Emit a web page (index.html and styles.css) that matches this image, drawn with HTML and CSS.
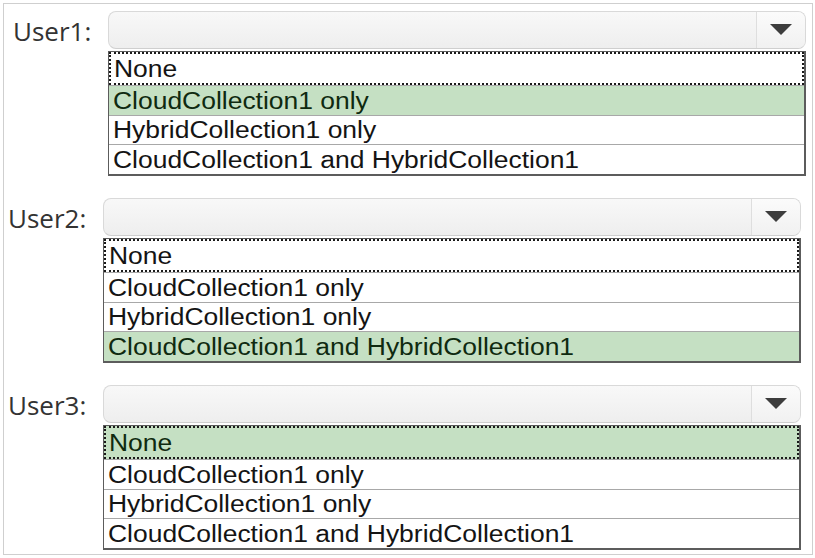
FILE: index.html
```html
<!DOCTYPE html>
<html>
<head>
<meta charset="utf-8">
<link rel="stylesheet" href="styles.css">
</head>
<body>
<div class="frame">
  <div class="group group--shift">
    <div class="label">User1:</div>
    <div class="combo">
      <div class="combo-field"></div>
      <div class="combo-btn"><span class="arrow"></span></div>
    </div>
    <div class="list">
      <div class="row focus"><span class="txt">None</span></div>
      <div class="row selected"><span class="txt">CloudCollection1 only</span></div>
      <div class="row"><span class="txt">HybridCollection1 only</span></div>
      <div class="row"><span class="txt">CloudCollection1 and HybridCollection1</span></div>
    </div>
  </div>
  <div class="group">
    <div class="label">User2:</div>
    <div class="combo">
      <div class="combo-field"></div>
      <div class="combo-btn"><span class="arrow"></span></div>
    </div>
    <div class="list">
      <div class="row focus"><span class="txt">None</span></div>
      <div class="row"><span class="txt">CloudCollection1 only</span></div>
      <div class="row"><span class="txt">HybridCollection1 only</span></div>
      <div class="row selected"><span class="txt">CloudCollection1 and HybridCollection1</span></div>
    </div>
  </div>
  <div class="group">
    <div class="label">User3:</div>
    <div class="combo">
      <div class="combo-field"></div>
      <div class="combo-btn"><span class="arrow"></span></div>
    </div>
    <div class="list">
      <div class="row focus selected"><span class="txt">None</span></div>
      <div class="row"><span class="txt">CloudCollection1 only</span></div>
      <div class="row"><span class="txt">HybridCollection1 only</span></div>
      <div class="row"><span class="txt">CloudCollection1 and HybridCollection1</span></div>
    </div>
  </div>
</div>
</body>
</html>
```
FILE: styles.css
```css
html, body {
  margin: 0;
  padding: 0;
  background: #ffffff;
}

.frame {
  box-sizing: border-box;
  margin: 3px;
  width: 810px;
  height: 552px;
  border: 1px solid #cfcfcf;
  padding: 7px 0 0 0;
  display: flex;
  flex-direction: column;
  gap: 22px;
}

.group {
  display: grid;
  grid-template-columns: 99px 698px;
  grid-template-rows: 38px 125px;
  row-gap: 2px;
}

.group--shift {
  padding-left: 5px;
}

.label {
  grid-column: 1;
  grid-row: 1;
  align-self: center;
  padding-left: 4px;
  font-family: "Open Sans", "DejaVu Sans", sans-serif;
  font-size: 26px;
  line-height: 30px;
  color: #333333;
  margin-top: 2px;
}

.combo {
  grid-column: 2;
  grid-row: 1;
  box-sizing: border-box;
  display: flex;
  border: 1px solid #d9d9d9;
  border-bottom-color: #cfcfcf;
  border-radius: 8px;
  background: linear-gradient(#f8f8f8, #eeeeee);
  overflow: hidden;
}

.combo-field {
  flex: 1;
}

.combo-btn {
  width: 49px;
  border-left: 1px solid #dedede;
  background: linear-gradient(#fbfbfb, #f1f1f1);
  display: flex;
  align-items: center;
  justify-content: center;
  padding-bottom: 2px;
  box-sizing: border-box;
}

.arrow {
  width: 0;
  height: 0;
  border-left: 11px solid transparent;
  border-right: 11px solid transparent;
  border-top: 11px solid #3d3d3d;
}

.list {
  grid-column: 2;
  grid-row: 2;
  box-sizing: border-box;
  border-style: solid;
  border-color: #5c5c5c;
  border-width: 1px 2px 2px 1px;
  background: #ffffff;
  display: flex;
  flex-direction: column;
}

.row {
  box-sizing: border-box;
  flex: 1;
  border-top: 1px solid #a8a8a8;
  padding-left: 4px;
  font-family: "Liberation Sans", Arial, sans-serif;
  font-size: 23px;
  color: #141414;
  display: flex;
  align-items: center;
  white-space: nowrap;
  overflow: hidden;
}

.row:first-child {
  border-top: none;
}

.row.focus {
  border: 2px dotted #1a1a1a;
  padding-left: 3px;
}

.row.selected {
  background: #c5e0c3;
  color: #0f2a10;
}

.txt {
  display: inline-block;
  transform: scaleX(1.15);
  transform-origin: left center;
  line-height: 26px;
  margin-top: 1px;
}
```
